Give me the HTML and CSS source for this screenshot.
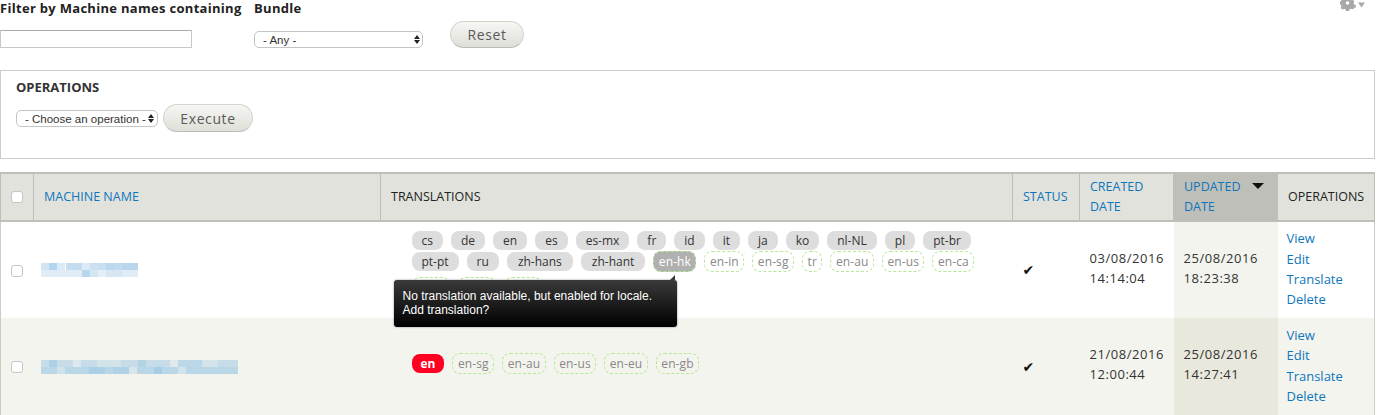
FILE: index.html
```html
<!DOCTYPE html>
<html lang="en">
<head>
    <meta charset="UTF-8">
    <title>Content</title>
    <link rel="stylesheet" href="styles.css">
</head>
<body>

    <svg class="gear" width="26" height="11" viewBox="0 0 26 11">
        <path fill="#a8a8a8" d="M6 -2h3l.4 1.700 1.500.6 1.500-.9 2 2-.9 1.500.6 1.500 1.700.4v2.600l-1.700.4-.6 1.500-2.600-.5-1.500.7-.4 1.400h-3l-.4-1.400-1.500-.7-1.500.9-2-2 .9-1.500-.6-1.500-1.700-.4v-2.600l1.700-.4.6-1.500-.9-1.500 2-2 1.500.9 1.500-.6z"/>
        <circle fill="#fff" cx="7.500" cy="3" r="1.800"/>
        <path fill="#a8a8a8" d="M18 2.500h7l-3.500 5z"/>
    </svg>

    <form class="filters">
        <div class="filter filter-name">
            <label>Filter by Machine names containing</label>
            <input type="text" class="text-input">
        </div>
        <div class="filter filter-bundle">
            <label>Bundle</label>
            <span class="select-wrap select-bundle">
                <select><option>- Any -</option></select>
            </span>
        </div>
        <button type="button" class="btn btn-reset">Reset</button>
    </form>

    <section class="operations">
        <h2>OPERATIONS</h2>
        <div class="operations-row">
            <span class="select-wrap select-op">
                <select><option>- Choose an operation -</option></select>
            </span>
            <button type="button" class="btn btn-execute">Execute</button>
        </div>
    </section>

    <table class="list">
        <colgroup>
            <col class="col-check">
            <col class="col-name">
            <col class="col-trans">
            <col class="col-status">
            <col class="col-created">
            <col class="col-updated">
            <col class="col-ops">
        </colgroup>
        <thead>
            <tr>
                <th class="center"><input type="checkbox"></th>
                <th><a href="#">MACHINE NAME</a></th>
                <th>TRANSLATIONS</th>
                <th><a href="#">STATUS</a></th>
                <th><a href="#">CREATED DATE</a></th>
                <th class="sorted"><a href="#">UPDATED <i class="sort-arrow"></i> DATE</a></th>
                <th>OPERATIONS</th>
            </tr>
        </thead>
        <tbody>
            <tr>
                <td class="center"><input type="checkbox"></td>
                <td>
                    <svg class="blurred" width="98" height="14" viewBox="0 0 98 14">
                        <g fill="#c3dcef">
                            <rect x="0" width="8" height="7" fill="#d3e5f3"/>
                            <rect x="8" width="8" height="7" fill="#b2d4ec"/>
                            <rect x="16" width="8" height="7" fill="#d9e9f5"/>
                            <rect x="24" width="1" height="7" fill="#fff"/>
                            <rect x="25" y="0" width="8" height="7"/>
                            <rect x="33" width="8" height="7"/>
                            <rect x="41" width="8" height="7" fill="#dbeaf5"/>
                            <rect x="49" width="8" height="7" fill="#cbe0f0"/>
                            <rect x="57" width="8" height="7" fill="#c8dff0"/>
                            <rect x="65" width="8" height="7" fill="#bcd8ee"/>
                            <rect x="73" width="8" height="7" fill="#c0dbee"/>
                            <rect x="81" width="16" height="7" fill="#b9d6ed"/>
                            <rect x="0" y="7" width="41" height="7" fill="#e0edf6"/>
                            <rect x="41" y="7" width="8" height="7" fill="#b8d6ec"/>
                            <rect x="49" y="7" width="8" height="7" fill="#d5e6f3"/>
                            <rect x="57" y="7" width="8" height="7" fill="#e4eff7"/>
                            <rect x="65" y="7" width="16" height="7" fill="#d6e7f3"/>
                            <rect x="81" y="7" width="16" height="7" fill="#e0edf6"/>
                        </g>
                    </svg>
                </td>
                <td>
                    <div class="chips chips-long">
                        <span class="chip">cs</span>
                        <span class="chip">de</span>
                        <span class="chip">en</span>
                        <span class="chip">es</span>
                        <span class="chip">es-mx</span>
                        <span class="chip">fr</span>
                        <span class="chip">id</span>
                        <span class="chip">it</span>
                        <span class="chip">ja</span>
                        <span class="chip">ko</span>
                        <span class="chip">nl-NL</span>
                        <span class="chip">pl</span>
                        <span class="chip">pt-br</span>
                        <span class="chip">pt-pt</span>
                        <span class="chip">ru</span>
                        <span class="chip chip-zh">zh-hans</span>
                        <span class="chip chip-zh">zh-hant</span>
                        <span class="chip chip-hover">en-hk</span>
                        <span class="chip chip-empty">en-in</span>
                        <span class="chip chip-empty">en-sg</span>
                        <span class="chip chip-empty">tr</span>
                        <span class="chip chip-empty">en-au</span>
                        <span class="chip chip-empty">en-us</span>
                        <span class="chip chip-empty">en-ca</span>
                        <span class="chip chip-empty chip-under"></span>
                        <span class="chip chip-empty chip-under"></span>
                        <span class="chip chip-empty chip-under"></span>
                        <div class="tooltip">No translation available, but enabled for locale.<br>Add translation?</div>
                    </div>
                </td>
                <td class="check">&#10004;</td>
                <td class="date">03/08/2016<br>14:14:04</td>
                <td class="date sorted">25/08/2016<br>18:23:38</td>
                <td class="links">
                    <a href="#">View</a><br>
                    <a href="#">Edit</a><br>
                    <a href="#">Translate</a><br>
                    <a href="#">Delete</a>
                </td>
            </tr>
            <tr class="even">
                <td class="center"><input type="checkbox"></td>
                <td>
                    <svg class="blurred" width="198" height="14" viewBox="0 0 198 14">
                        <rect width="197" height="7" fill="#c6dde9"/>
                        <rect y="7" width="197" height="7" fill="#bad7e8"/>
                        <rect x="8" width="8" height="7" fill="#aed0e6"/>
                        <rect x="32" width="8" height="7" fill="#dce8ec"/>
                        <rect x="56" width="24" height="7" fill="#d3e3ea"/>
                        <rect x="97" width="8" height="7" fill="#b2d2e6"/>
                        <rect x="129" width="8" height="7" fill="#e0eaec"/>
                        <rect x="137" width="24" height="7" fill="#bbd8e8"/>
                        <rect x="161" width="16" height="7" fill="#d4e3ea"/>
                        <rect y="7" x="16" width="8" height="7" fill="#d0e2ea"/>
                        <rect y="7" x="48" width="16" height="7" fill="#aacfe6"/>
                        <rect y="7" x="72" width="16" height="7" fill="#b0d2e6"/>
                        <rect y="7" x="88" width="8" height="7" fill="#d8e6ec"/>
                        <rect y="7" x="113" width="8" height="7" fill="#a6cde6"/>
                        <rect y="7" x="137" width="8" height="7" fill="#d2e3ea"/>
                    </svg>
                </td>
                <td>
                    <div class="chips">
                        <span class="chip chip-source">en</span>
                        <span class="chip chip-empty">en-sg</span>
                        <span class="chip chip-empty">en-au</span>
                        <span class="chip chip-empty">en-us</span>
                        <span class="chip chip-empty">en-eu</span>
                        <span class="chip chip-empty">en-gb</span>
                    </div>
                </td>
                <td class="check">&#10004;</td>
                <td class="date">21/08/2016<br>12:00:44</td>
                <td class="date sorted">25/08/2016<br>14:27:41</td>
                <td class="links">
                    <a href="#">View</a><br>
                    <a href="#">Edit</a><br>
                    <a href="#">Translate</a><br>
                    <a href="#">Delete</a>
                </td>
            </tr>
        </tbody>
    </table>

</body>
</html>
```

FILE: styles.css
```css
html, body {
    margin: 0;
    height: 415px;
    overflow: hidden;
}
body {
    position: relative;
    width: 1375px;
    font-family: "Open Sans", "DejaVu Sans", sans-serif;
    font-size: 13px;
    color: #222;
    background: #fff;
}
a {
    color: #0e76bc;
    text-decoration: none;
}
.gear {
    position: absolute;
    top: 0;
    left: 1340px;
}

/* filters */
.filters {
    display: flex;
    height: 70px;
}
.filter label {
    display: block;
    height: 30px;
    font-weight: 700;
    font-size: 13px;
    line-height: 16px;
    letter-spacing: .3px;
    white-space: nowrap;
}
.filter-name {
    width: 254px;
}
.filter-bundle {
    width: 196px;
}
.text-input {
    display: block;
    box-sizing: border-box;
    width: 192px;
    height: 18px;
    margin: 0;
    padding: 0 4px;
    border: 1px solid #c8c8c8;
    border-top-color: #aaa;
}
.select-wrap {
    position: relative;
    display: inline-block;
}
.select-wrap select {
    display: block;
    box-sizing: border-box;
    width: 100%;
    height: 17px;
    margin: 0;
    padding: 0 0 0 8px;
    appearance: none;
    background: #fff;
    border: 1px solid #c4c4c4;
    border-radius: 5px;
    font-family: "Liberation Sans", Arial, sans-serif;
    font-size: 11.500px;
    color: #333;
}
.select-wrap::before,
.select-wrap::after {
    content: "";
    position: absolute;
    right: 4px;
    border-left: 3px solid transparent;
    border-right: 3px solid transparent;
}
.select-wrap::before {
    top: 4px;
    border-bottom: 4px solid #222;
}
.select-wrap::after {
    top: 9px;
    border-top: 4px solid #222;
}
.select-bundle {
    display: block;
    width: 169px;
    margin-top: 1px;
}
.select-bundle::before,
.select-bundle::after {
    right: 3px;
}
.select-op {
    width: 142px;
    margin-top: 6px;
}
.btn {
    box-sizing: border-box;
    margin: 0;
    border: 1px solid #d4d4d0;
    border-bottom-color: #bdbdb8;
    border-radius: 14px;
    background: linear-gradient(#f6f6f3, #dfdfd9);
    font-family: "Open Sans", "DejaVu Sans", sans-serif;
    font-size: 14px;
    letter-spacing: .6px;
    color: #5a5a5a;
}
.btn-reset {
    width: 74px;
    height: 27px;
    margin-top: 21px;
}
.btn-execute {
    width: 90px;
    height: 28px;
}

/* operations box */
.operations {
    box-sizing: border-box;
    height: 89px;
    padding: 8px 15px 0;
    border: 1px solid #ccc;
}
.operations h2 {
    margin: 0 0 8px;
    font-size: 13px;
    line-height: 17px;
    font-weight: 700;
    color: #333;
}
.operations-row {
    display: flex;
    align-items: flex-start;
    gap: 5px;
}

/* table */
.list {
    width: 1375px;
    margin-top: 13px;
    table-layout: fixed;
    border-collapse: collapse;
    border-left: 1px solid #ccc;
    border-right: 1px solid #ccc;
}
.col-check { width: 33px; }
.col-name { width: 347px; }
.col-trans { width: 632px; }
.col-status { width: 67px; }
.col-created { width: 94px; }
.col-updated { width: 104px; }
.col-ops { width: 97px; }
.list th {
    height: 46px;
    padding: 0 10px;
    background: #e1e2dc;
    border: 1px solid #bebfb9;
    border-width: 2px 1px;
    text-align: left;
    font-weight: 400;
    font-size: 12.500px;
    line-height: 20px;
    color: #222;
}
.list th.sorted {
    background: #bebfb9;
}
.list td {
    box-sizing: border-box;
    height: 97px;
    padding: 0 10px;
    vertical-align: middle;
}
.list .center {
    padding: 0;
    text-align: center;
}
.list input[type="checkbox"] {
    display: block;
    box-sizing: border-box;
    width: 12px;
    height: 12px;
    margin: 0 0 0 10px;
    appearance: none;
    background: #fff;
    border: 1px solid #c6c6c6;
    border-radius: 3px;
}
.list td input[type="checkbox"] {
    margin-top: 1px;
}
.even td {
    background: #f3f4ee;
}
td.sorted {
    background: #f3f4ee;
}
.even td.sorted {
    background: #e8e8dc;
}
.sort-arrow {
    display: inline-block;
    margin-left: 8px;
    vertical-align: 2px;
    border-left: 6px solid transparent;
    border-right: 6px solid transparent;
    border-top: 6px solid #111;
}
.blurred {
    display: block;
    margin-left: -3px;
    filter: blur(.5px);
}
.check {
    font-family: "DejaVu Sans", sans-serif;
    font-size: 14px;
    color: #111;
}
.list td.date {
    padding-bottom: 5px;
    line-height: 20px;
    letter-spacing: .55px;
    color: #333;
}
.list td.links {
    padding-left: 9px;
    padding-bottom: 2px;
    line-height: 20.300px;
}

/* translation chips */
.chips {
    position: relative;
    display: flex;
    flex-wrap: wrap;
    gap: 2px 8px;
    width: 570px;
    margin: 0 0 6px 21px;
}
.chips-long {
    margin-bottom: 13px;
}
.chip {
    box-sizing: border-box;
    height: 19px;
    padding: 0 10px;
    border-radius: 8px;
    background: #ddd;
    font-size: 12px;
    line-height: 19px;
    color: #333;
}
.chip-zh {
    padding: 0 11px;
}
.chip-empty,
.chip-hover {
    height: 21px;
    margin-top: -1px;
    margin-bottom: -1px;
    padding: 0 4.500px;
    border: 1px dashed #b5ea95;
    background: transparent;
    color: #888;
    letter-spacing: .1px;
}
.chip-hover {
    background: #b0b0b0;
    color: #fff;
}
.chip-under {
    width: 38px;
    margin-top: 4px;
}
.chip-source {
    padding: 0 9px;
    background: #ff0022;
    color: #fff;
    font-weight: 700;
}
.tooltip {
    position: absolute;
    top: 49px;
    left: -18px;
    box-sizing: border-box;
    width: 283px;
    height: 47px;
    padding: 9px 9px 0;
    border-radius: 3px;
    background: linear-gradient(#3a3a3a, #000);
    box-shadow: 0 0 2px rgba(0, 0, 0, .5);
    font-family: "Liberation Sans", Arial, sans-serif;
    font-size: 12px;
    line-height: 14px;
    color: #fff;
}
.tooltip::before {
    content: "";
    position: absolute;
    top: -5px;
    right: 2px;
    border-left: 5px solid transparent;
    border-right: 0 solid transparent;
    border-bottom: 5px solid #3a3a3a;
}
```
